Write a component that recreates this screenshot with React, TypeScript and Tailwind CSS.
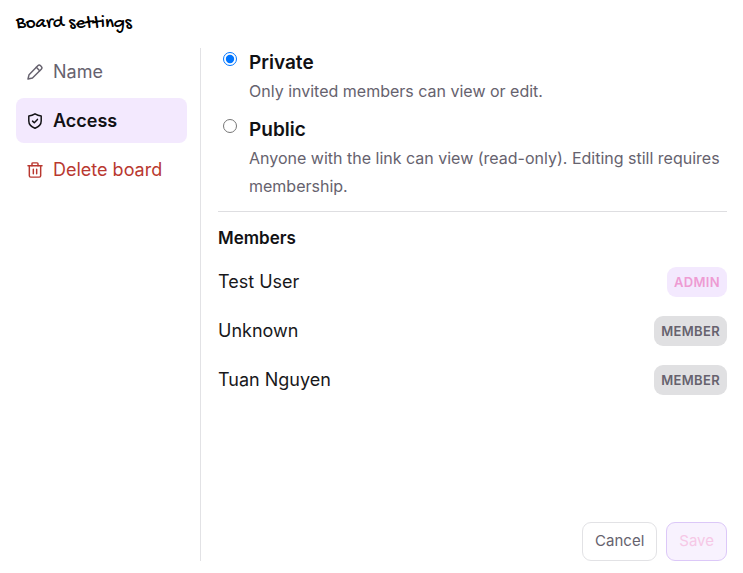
import React, { useState } from 'react';
import { clsx } from 'clsx';

type Tab = 'name' | 'access' | 'delete';

const members = [
  { name: 'Test User', role: 'Admin' },
  { name: 'Unknown', role: 'Member' },
  { name: 'Tuan Nguyen', role: 'Member' },
];

const visibilities = [
  {
    id: 'private',
    label: 'Private',
    description: 'Only invited members can view or edit.',
  },
  {
    id: 'public',
    label: 'Public',
    description: 'Anyone with the link can view (read-only). Editing still requires membership.',
  },
];

function PencilIcon() {
  return (
    <svg viewBox="0 0 24 24" className="size-4" fill="none" stroke="currentColor" strokeWidth="2.2" strokeLinejoin="round" strokeLinecap="round" aria-hidden="true">
      <path d="M1.5 22.5l1.600-6.500L16.200 2.600a3 3 0 0 1 4.200 0l1 1a3 3 0 0 1 0 4.200L8.200 21 1.500 22.500z" />
      <path d="M14 5l5 5" />
    </svg>
  );
}

function ShieldIcon() {
  return (
    <svg viewBox="0 0 24 24" className="size-4" fill="none" stroke="currentColor" strokeWidth="2.2" strokeLinejoin="round" strokeLinecap="round" aria-hidden="true">
      <path d="M12 1.300c2.900 1.900 6 2.900 9.300 3.100v7.600c0 5.200-3.300 8.600-9.300 10.900-6-2.300-9.300-5.700-9.300-10.900V4.400c3.300-.2 6.400-1.200 9.300-3.100z" />
      <path d="M8.300 12.200l2.600 2.400 4.800-5" />
    </svg>
  );
}

function TrashIcon() {
  return (
    <svg viewBox="0 0 24 24" className="size-4" fill="none" stroke="currentColor" strokeWidth="2.2" strokeLinejoin="round" strokeLinecap="round" aria-hidden="true">
      <path d="M1.500 5.500h21" />
      <path d="M7.500 5.500V2.600A1.300 1.300 0 0 1 8.800 1.300h6.400a1.300 1.300 0 0 1 1.300 1.300v2.900" />
      <path d="M3.500 5.500v15.200a2 2 0 0 0 2 2h13a2 2 0 0 0 2-2V5.500" />
      <path d="M9.500 11v6.500M14.500 11v6.500" />
    </svg>
  );
}

const tabs: { id: Tab; label: string; icon: React.ReactNode }[] = [
  { id: 'name', label: 'Name', icon: <PencilIcon /> },
  { id: 'access', label: 'Access', icon: <ShieldIcon /> },
  { id: 'delete', label: 'Delete board', icon: <TrashIcon /> },
];

export default function App() {
  const [tab, setTab] = useState<Tab>('access');
  const [visibility, setVisibility] = useState('private');

  return (
    <main className="flex min-h-screen flex-col bg-white px-4 py-3 font-['Inter',sans-serif] text-[#18181b]">
      <h1 className="mb-3 font-['Gochi_Hand','Lato',cursive] text-[19px] leading-6 font-normal text-black">
        Board settings
      </h1>

      <div className="flex flex-1">
        <nav className="w-[185px] shrink-0 border-r border-[#e2e2e5] pt-px pr-[13px]">
          <div className="flex flex-col gap-1">
            {tabs.map((item) => (
              <button
                key={item.id}
                type="button"
                onClick={() => setTab(item.id)}
                className={clsx(
                  'flex h-[45px] items-center gap-[10px] rounded-lg px-[11px] text-left text-lg',
                  item.id === tab && 'bg-[#f3e9fe] font-semibold text-[#111114]',
                  item.id !== tab && item.id === 'delete' && 'text-[#b93830]',
                  item.id !== tab && item.id !== 'delete' && 'text-[#66626e]'
                )}
              >
                {item.icon}
                {item.label}
              </button>
            ))}
          </div>
        </nav>

        <section className="flex min-w-0 flex-1 flex-col pt-px pl-[17px]">
          <div
            role="radiogroup"
            aria-label="Board visibility"
            className="flex flex-col gap-[11px] border-b border-[#dedee1] pb-[11px]"
          >
            {visibilities.map((option) => (
              <div key={option.id} className="flex items-start gap-3 pl-[5px]">
                <input
                  type="radio"
                  id={option.id}
                  name="visibility"
                  checked={visibility === option.id}
                  onChange={() => setVisibility(option.id)}
                  className="mt-[3px] size-[14px] shrink-0"
                />
                <div>
                  <label htmlFor={option.id} className="block text-[19px] leading-7 font-semibold text-[#111114]">
                    {option.label}
                  </label>
                  <p className="text-base leading-7 text-[#66626e]">{option.description}</p>
                </div>
              </div>
            ))}
          </div>

          <h2 className="mt-3 text-[17px] leading-7 font-semibold text-[#111114]">Members</h2>
          <ul className="mt-[5px]">
            {members.map((member) => (
              <li key={member.name} className="flex h-[49px] items-center justify-between">
                <span className="text-lg">{member.name}</span>
                <span
                  className={clsx(
                    'rounded-[9px] px-[7px] py-[5px] text-[13px] leading-5 font-semibold tracking-wide uppercase',
                    member.role === 'Admin' ? 'bg-[#f3e9fe] text-[#ee9bd3]' : 'bg-[#e0e0e2] text-[#66626e]'
                  )}
                >
                  {member.role}
                </span>
              </li>
            ))}
          </ul>

          <div className="mt-auto flex justify-end gap-[9px]">
            <button type="button" className="h-[39px] rounded-[9px] border border-[#e2e2e5] px-3 text-[15px] text-[#66626e]">
              Cancel
            </button>
            <button type="button" disabled className="h-[39px] rounded-[9px] border border-[#dcc8f8] bg-[#f8f2fe] px-3 text-[15px] text-[#f6c8e6]">
              Save
            </button>
          </div>
        </section>
      </div>
    </main>
  );
}
